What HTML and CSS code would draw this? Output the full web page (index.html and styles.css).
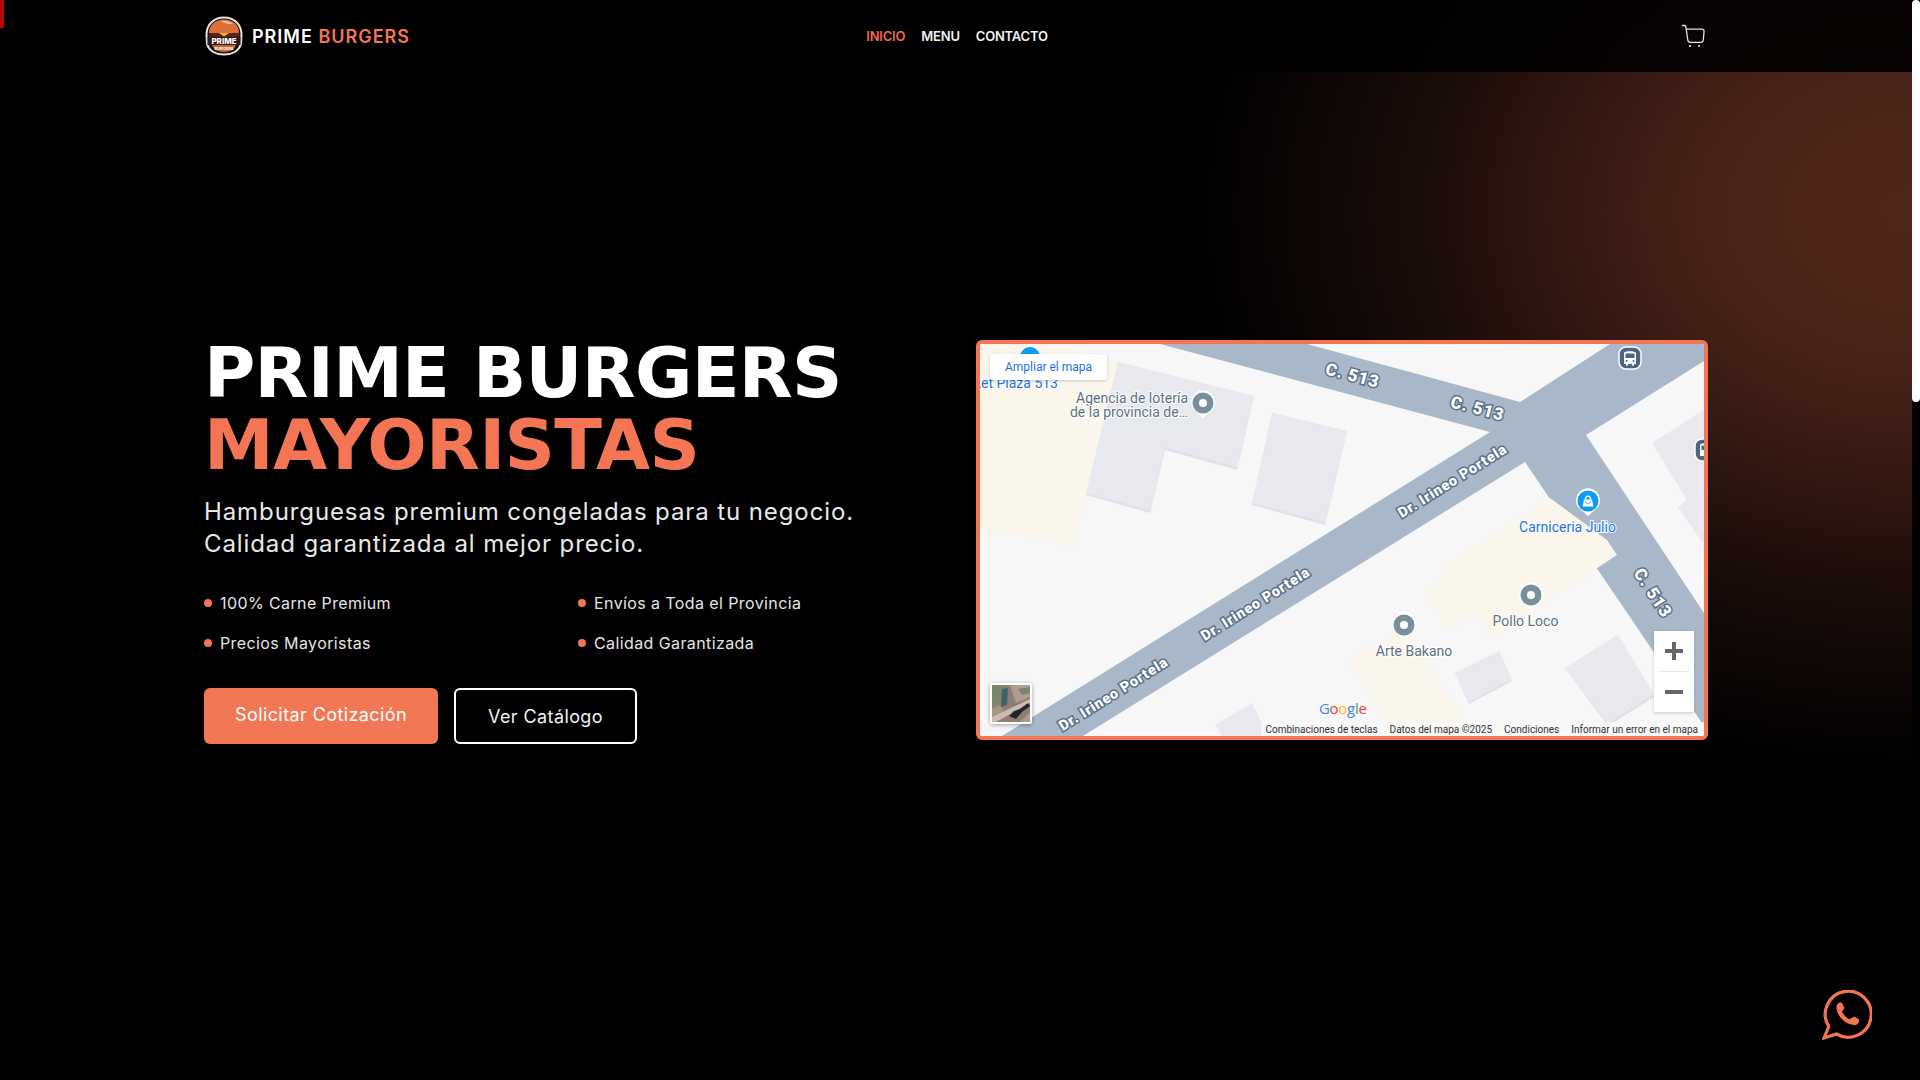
FILE: index.html
```html
<!DOCTYPE html>
<html lang="es">
<head>
<meta charset="utf-8">
<title>Prime Burgers</title>
<link rel="stylesheet" href="styles.css">
</head>
<body>
<div class="page">
  <main class="content">
    <div class="top-mark"></div>
    <section class="hero">
      <header class="site-header">
        <div class="header-inner">
          <a class="brand">
            <svg class="brand-logo" viewBox="0 0 40 40">
              <path d="M3 28 L2.500 18 C3 8 10 1.500 20 1.500 C30 1.500 37 8 37.500 18 L37 28 C35 35 28 38.500 20 38.500 C12 38.500 5 35 3 28 Z" fill="#14100e" stroke="#e8e6e3" stroke-width="2"/>
              <path d="M5 17 C5 9 11 3.500 20 3.500 C29 3.500 35 9 35 17 Z" fill="#dc6f3a"/>
              <path d="M17 5 C21 4 27 5.500 29 8 C25 8.500 20 7.500 17 5 Z" fill="#efc0a2"/>
              <path d="M5 17 H35 V21 H5 Z" fill="#5e1f14"/>
              <path d="M15 17 H25 L20 20.500 Z" fill="#f4b62a"/>
              <path d="M3.500 21 H36.500 V29 H3.500 Z" fill="#2a1c16"/>
              <text class="logo-word" x="20" y="27.500">PRIME</text>
              <path d="M8 29 H32 C30 34 26 36 20 36 C14 36 10 34 8 29 Z" fill="#c9612f"/>
              <text class="logo-sub" x="20" y="34">BURGERS</text>
            </svg>
            <span class="brand-name">PRIME <span class="accent">BURGERS</span></span>
          </a>
          <nav class="main-nav">
            <a class="nav-link active">INICIO</a>
            <a class="nav-link">MENU</a>
            <a class="nav-link">CONTACTO</a>
          </nav>
          <svg class="cart" viewBox="0 0 24 24">
            <path d="M1 1.500 H3.600 C4.300 1.500 4.700 2 4.800 2.600 L6.800 16 C7 17.600 7.900 18.300 9.300 18.300 H19.800 C21.300 18.300 22.100 17.500 22.300 16 L23 7.500 C23.100 5.800 22.300 5.200 21 5.200 H5.400" fill="none" stroke="#e4e4e4" stroke-width="1.300"/>
            <circle cx="9" cy="22" r="1.100" fill="#e4e4e4"/>
            <circle cx="18" cy="22" r="1.100" fill="#e4e4e4"/>
          </svg>
        </div>
      </header>

      <div class="hero-grid">
        <div class="hero-copy">
          <h1 class="title"><span class="title-line">PRIME BURGERS</span><span class="title-line accent">MAYORISTAS</span></h1>
          <p class="lead">Hamburguesas premium congeladas para tu negocio.<br>Calidad garantizada al mejor precio.</p>
          <ul class="features">
            <li class="feature">100% Carne Premium</li>
            <li class="feature">Envíos a Toda el Provincia</li>
            <li class="feature">Precios Mayoristas</li>
            <li class="feature">Calidad Garantizada</li>
          </ul>
          <div class="actions">
            <a class="btn btn-primary"><span class="btn-lift">Solicitar Cotización</span></a>
            <a class="btn btn-outline">Ver Catálogo</a>
          </div>
        </div>

        <div class="map">
          <svg class="map-canvas" viewBox="980 344 724 392">
            <rect x="980" y="344" width="724" height="392" fill="#f7f7f7"/>
            <!-- land use -->
            <path d="M980 344 H1050 L1118 362 L1073 547 L980 527 Z" fill="#faf6ec"/>
            <path d="M1348 658 L1405 628 L1465 722 L1473 736 H1395 Z" fill="#faf6ec"/>
            <!-- buildings -->
            <path d="M1118 362 L1254 396 L1237 470 L1165 450 L1150 513 L1086 495 Z" fill="#dfe0e8"/>
            <path d="M1118 362 L1254 396 L1237 467 L1165 447 L1150 510 L1086 493 Z" fill="#e8e9ee"/>
            <path d="M1272 413 L1347 431 L1325 525 L1252 505 Z" fill="#dfe0e8"/>
            <path d="M1272 413 L1347 431 L1325 522 L1252 503 Z" fill="#e8e9ee"/>
            <path d="M1704 410 L1652 443 L1687 500 L1678 507 L1704 545 Z" fill="#e8e9ee"/>
            <path d="M1455 673 L1499 651 L1512 681 L1469 704 Z" fill="#dfe0e8"/>
            <path d="M1455 673 L1499 651 L1512 679 L1469 702 Z" fill="#e8e9ee"/>
            <path d="M1565 668 L1618 635 L1654 697 L1608 726 Z" fill="#dfe0e8"/>
            <path d="M1565 668 L1618 635 L1654 694 L1608 723 Z" fill="#e8e9ee"/>
            <path d="M1215 725 L1252 703 L1268 736 H1222 Z" fill="#e8e9ee"/>
            <!-- roads -->
            <path d="M1002 736 L1490 432 L1160 344 H1307 L1520 402 L1610 344 H1704 V361 L1586 435 L1704 613 V726 L1598 570 L1525 462 L1083 736 Z" fill="#a8b8c8"/>
            <path d="M1550 498 L1607 540 L1617 555 L1490 638 L1475 615 L1448 630 L1425 592 L1447 578 L1443 568 Z" fill="#faf6ec"/>
            <!-- road labels -->
            <text class="road-label road-short" transform="translate(1351 381) rotate(15)">C. 513</text>
            <text class="road-label road-short" transform="translate(1476 414) rotate(15)">C. 513</text>
            <text class="road-label road-short" transform="translate(1648 596) rotate(57)">C. 513</text>
            <text class="road-label" transform="translate(1455 485) rotate(-32)">Dr. Irineo Portela</text>
            <text class="road-label" transform="translate(1258 608) rotate(-32)">Dr. Irineo Portela</text>
            <text class="road-label" transform="translate(1116 698) rotate(-32)">Dr. Irineo Portela</text>
            <!-- places -->
            <circle cx="1030" cy="357" r="10" fill="#0d9bf5"/>
            <text class="poi poi-blue end" x="1058" y="388">ket Plaza 513</text>
            <text class="poi end" x="1188" y="403">Agencia de lotería</text>
            <text class="poi end" x="1188" y="417">de la provincia de…</text>
            <text class="poi poi-blue mid" x="1567.500" y="532">Carniceria Julio</text>
            <text class="poi mid" x="1525.500" y="626">Pollo Loco</text>
            <text class="poi mid" x="1414" y="656">Arte Bakano</text>
            <g>
              <path d="M1203 418 L1193 409 A12 12 0 1 1 1213 409 Z" fill="#fff"/>
              <circle cx="1203" cy="403" r="10.500" fill="#78909c"/>
              <circle cx="1203" cy="403" r="4" fill="#fff"/>
            </g>
            <g>
              <path d="M1531 610 L1521 601 A12 12 0 1 1 1541 601 Z" fill="#fff"/>
              <circle cx="1531" cy="595" r="10.500" fill="#78909c"/>
              <circle cx="1531" cy="595" r="4" fill="#fff"/>
            </g>
            <g>
              <path d="M1404 640 L1394 631 A12 12 0 1 1 1414 631 Z" fill="#fff"/>
              <circle cx="1404" cy="625" r="10.500" fill="#78909c"/>
              <circle cx="1404" cy="625" r="4" fill="#fff"/>
            </g>
            <g>
              <path d="M1588 516 L1578 507 A12 12 0 1 1 1598 507 Z" fill="#fff"/>
              <circle cx="1588" cy="501" r="10.500" fill="#0d9bf5"/>
              <path d="M1584 499.500 H1592 L1593.500 506.500 H1582.500 Z" fill="#fff"/>
              <path d="M1585.500 499.500 C1585.500 495 1590.500 495 1590.500 499.500" fill="none" stroke="#fff" stroke-width="1.200"/>
              <path d="M1585.500 501.500 C1586 504 1590 504 1590.500 501.500" fill="none" stroke="#0d9bf5" stroke-width="0.900"/>
            </g>
            <g>
              <rect x="1619" y="347" width="22" height="22" rx="7" fill="#4a6580" stroke="#fff" stroke-width="1.500"/>
              <path d="M1624 353 C1624 350.500 1636 350.500 1636 353 V364 H1634 V365.500 H1632 V364 H1628 V365.500 H1626 V364 H1624 Z" fill="#fff"/>
              <rect x="1625.500" y="353.500" width="9" height="4.500" fill="#4a6580"/>
              <circle cx="1626.500" cy="361" r="1" fill="#4a6580"/>
              <circle cx="1633.500" cy="361" r="1" fill="#4a6580"/>
              <rect x="1695" y="439" width="22" height="22" rx="7" fill="#4a6580" stroke="#fff" stroke-width="1.500"/>
              <path d="M1700 445 C1700 442.500 1712 442.500 1712 445 V456 H1700 Z" fill="#fff"/>
              <rect x="1701.500" y="445.500" width="9" height="4.500" fill="#4a6580"/>
            </g>
            <text class="google" x="1319" y="714"><tspan fill="#4285f4">G</tspan><tspan fill="#ea4335">o</tspan><tspan fill="#fbbc05">o</tspan><tspan fill="#4285f4">g</tspan><tspan fill="#34a853">l</tspan><tspan fill="#ea4335">e</tspan></text>
          </svg>

          <a class="map-expand">Ampliar el mapa</a>
          <svg class="map-thumb" viewBox="0 0 38 37">
            <rect width="38" height="37" fill="#8f7f70"/>
            <path d="M0 0 H14 L12 12 L0 20 Z" fill="#77866c"/>
            <path d="M18 0 H38 V12 L24 18 Z" fill="#b09c92"/>
            <path d="M26 4 L38 2 V8 L30 10 Z" fill="#7c8468"/>
            <path d="M0 24 L8 20 L12 26 L0 32 Z" fill="#a4987c"/>
            <path d="M10 4 L16 3 L15 20 L9 22 Z" fill="#40606e"/>
            <path d="M0 32 L38 14 V18 L4 37 H0 Z" fill="#cdbcb6"/>
            <path d="M17 31 L22 26 L28 24 L36 18 L38 21 L30 27 L24 34 Z" fill="#20252a"/>
            <path d="M28 37 L38 27 V37 Z" fill="#a89c90"/>
          </svg>
          <div class="zoom-ctrl">
            <button class="zoom-btn"><svg class="zoom-glyph" viewBox="0 0 18 18"><path d="M7 0 H11 V7 H18 V11 H11 V18 H7 V11 H0 V7 H7 Z"/></svg></button>
            <span class="zoom-sep"></span>
            <button class="zoom-btn"><svg class="zoom-glyph" viewBox="0 0 18 18"><path d="M0 7 H18 V11 H0 Z"/></svg></button>
          </div>
          <div class="attribution">
            <span>Combinaciones de teclas</span>
            <span>Datos del mapa ©2025</span>
            <span>Condiciones</span>
            <span>Informar un error en el mapa</span>
          </div>
        </div>
      </div>

      <a class="whatsapp">
        <svg class="whatsapp-icon" viewBox="0 0 50 50">
          <path d="M14.500 44 A23 23 0 1 0 6.800 36.500 L2 48 Z" fill="none" stroke="#f37554" stroke-width="3.200"/>
          <path d="M17 17 C16 23.500 24.500 33.500 33 32.500" fill="none" stroke="#f37554" stroke-width="4.500"/>
          <path d="M14.500 17 C14.500 13.500 17.500 11.500 20 13 L22.500 18 L19.500 22.500 L15.500 21 Z" fill="#f37554"/>
          <path d="M27.500 29 L32.500 26.500 L37 29.500 C37.500 32.500 35 35.200 32.500 35.200 L27 33 Z" fill="#f37554"/>
        </svg>
      </a>
    </section>
  </main>
  <aside class="rail"><div class="rail-thumb"></div></aside>
</div>
</body>
</html>
```

FILE: styles.css
```css
* { box-sizing: border-box; }
html, body { margin: 0; height: 100%; overflow: hidden; background: #000; }
body { font-family: "Inter", "Liberation Sans", sans-serif; color: #fff; }
a { color: inherit; text-decoration: none; }

.page { height: 100vh; display: flex; background: #000; }
.content { flex: 1; min-width: 0; height: 100vh; overflow: hidden; position: relative; }
.rail { width: 8px; background: #000; }
.rail-thumb { height: 402px; background: #fff; border-radius: 4px; }

.top-mark { position: absolute; top: 0; left: 0; width: 4px; height: 28px; background: #b8060f; z-index: 5; }

.hero {
  position: relative;
  height: 1080px;
  display: flex;
  align-items: center;
  justify-content: center;
  background:
    radial-gradient(ellipse 720px 560px at 1912px 210px, rgba(243,117,84,.33) 0%, rgba(243,117,84,.30) 25%, rgba(243,117,84,.26) 37%, rgba(243,117,84,.11) 68%, rgba(243,117,84,0) 100%),
    #000;
}

.site-header { position: absolute; top: 0; left: 0; right: 0; height: 72px; background: rgba(0,0,0,.88); }
.header-inner { width: 1504px; height: 72px; margin: 0 auto; display: grid; grid-template-columns: 1fr auto 1fr; align-items: center; }
.brand { display: flex; align-items: center; gap: 8px; }
.brand-logo { width: 40px; height: 40px; }
.logo-word { font: 800 8px "Inter", sans-serif; fill: #fff; text-anchor: middle; }
.logo-sub { font: 700 4px "Inter", sans-serif; fill: #fff; text-anchor: middle; }
.brand-name { font-size: 18px; font-weight: 600; letter-spacing: 1px; }
.accent { color: #f37554; }
.main-nav { display: flex; gap: 16px; margin-left: 2px; }
.nav-link { font-size: 13px; font-weight: 600; letter-spacing: -.2px; color: #f2f2f2; }
.nav-link.active { color: #f06a4c; }
.cart { width: 24px; height: 24px; justify-self: end; margin-right: 3px; }

.hero-grid { width: 1504px; display: grid; grid-template-columns: 1fr 1fr; gap: 40px; align-items: center; }
.title { margin: 0 0 15px; padding-top: 1px; font-family: "DejaVu Sans", sans-serif; font-size: 70px; line-height: 72px; font-weight: 700; letter-spacing: -.7px; }
.title-line { display: block; }
.lead { margin: 0 0 31px; font-size: 24px; line-height: 32px; letter-spacing: .9px; color: #e8e8e8; }
.features { list-style: none; margin: 0 0 33px; padding: 0; display: grid; grid-template-columns: 1fr 1fr; gap: 16px; }
.feature { display: flex; align-items: center; gap: 8px; height: 24px; font-size: 16px; letter-spacing: .4px; color: #e5e5e5; }
.feature::before { content: ""; width: 8px; height: 8px; border-radius: 50%; background: #f37554; }
.actions { display: flex; gap: 16px; }
.btn { display: flex; align-items: center; justify-content: center; height: 56px; border-radius: 6px; font-size: 18px; letter-spacing: .4px; }
.btn-primary { width: 234px; background: #f27855; color: #fff; }
.btn-lift { transform: translateY(-2px); }
.btn-outline { width: 183px; border: 2px solid #fff; color: #f2f2f2; }

.map { position: relative; height: 400px; border: 4px solid #f37554; border-radius: 6px; overflow: hidden; background: #f7f7f7; }
.map-canvas { display: block; width: 724px; height: 392px; }
.road-label { font: 900 14.5px "Roboto", sans-serif; letter-spacing: .8px; fill: #fff; stroke: #5a6f88; stroke-width: 3px; paint-order: stroke; text-anchor: middle; }
.road-short { font-size: 17px; }
.poi { font: 400 14px "Roboto", sans-serif; fill: #5b7083; stroke: #fff; stroke-width: 2px; paint-order: stroke; }
.poi-blue { fill: #1a73e8; }
.end { text-anchor: end; }
.mid { text-anchor: middle; }
.google { font: 500 15px "Open Sans", sans-serif; letter-spacing: -.3px; }
.map-expand { position: absolute; left: 10px; top: 10px; width: 117px; height: 26px; display: flex; align-items: center; justify-content: center; background: #fff; border-radius: 2px; box-shadow: 0 1px 3px rgba(0,0,0,.2); font: 400 12px "Roboto", sans-serif; color: #1a73e8; }
.map-thumb { position: absolute; left: 10px; top: 339px; width: 42px; height: 41px; border: 2px solid #fff; border-radius: 2px; box-shadow: 0 1px 4px rgba(0,0,0,.35); }
.zoom-ctrl { position: absolute; left: 674px; top: 287px; width: 40px; height: 81px; background: #fff; box-shadow: 0 1px 3px rgba(0,0,0,.2); display: flex; flex-direction: column; align-items: center; }
.zoom-btn { flex: 1; width: 40px; padding: 0; border: 0; background: none; display: flex; align-items: center; justify-content: center; }
.zoom-glyph { width: 18px; height: 18px; fill: #666; }
.zoom-sep { width: 30px; height: 1px; background: #e6e6e6; }
.attribution { position: absolute; right: 0; bottom: 0; height: 14px; padding: 0 6px 0 5px; display: flex; align-items: center; gap: 12px; background: rgba(247,247,247,.8); font: 400 10px "Roboto", sans-serif; color: #333; white-space: nowrap; }

.whatsapp { position: absolute; left: 1822px; top: 990px; width: 50px; height: 50px; }
.whatsapp-icon { display: block; width: 50px; height: 50px; }
```
